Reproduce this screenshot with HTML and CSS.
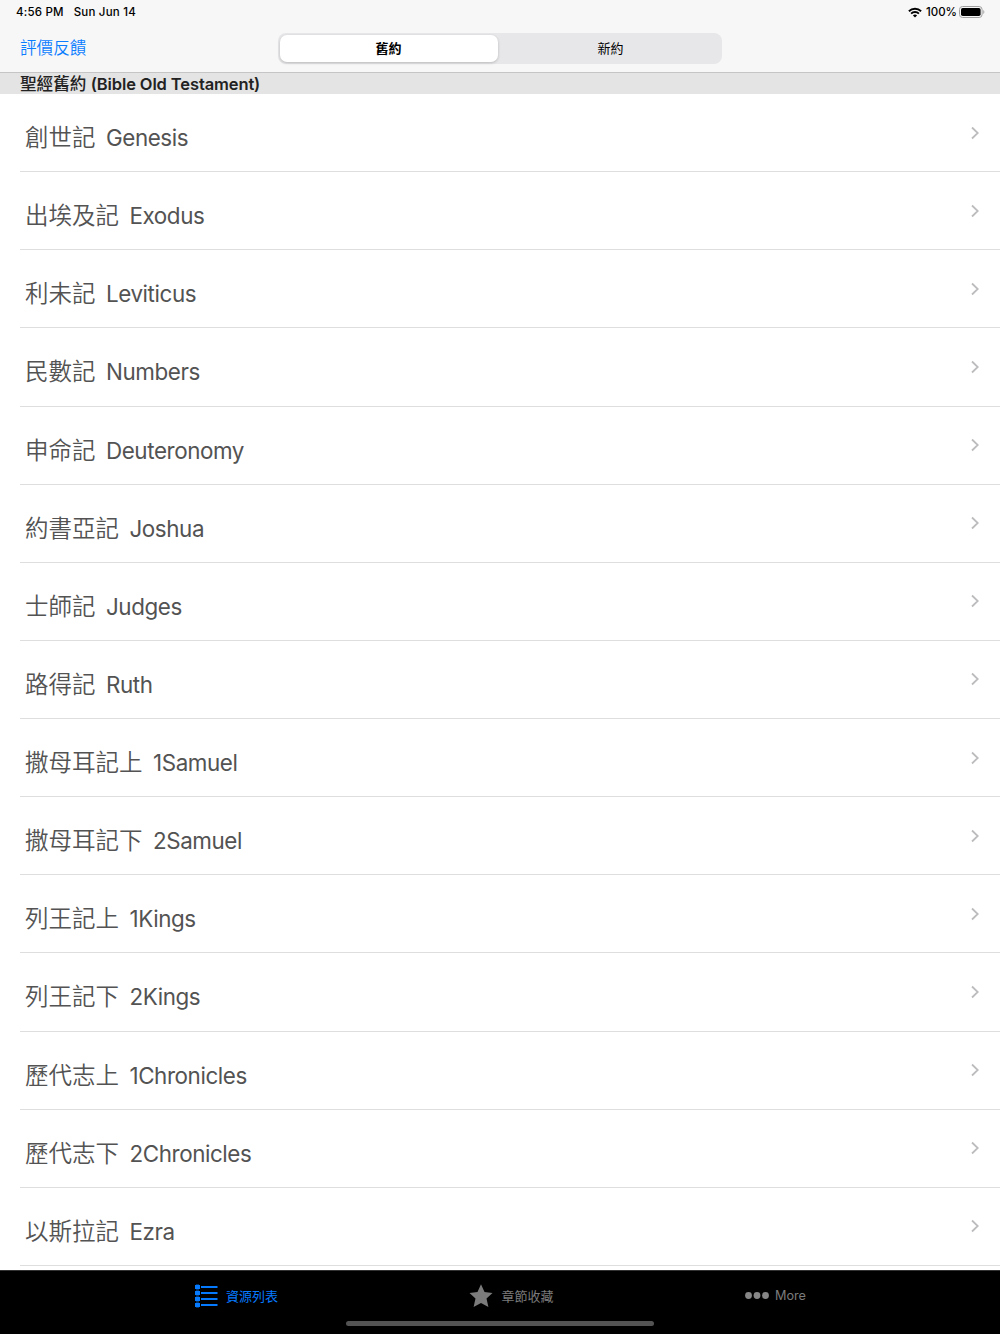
FILE: index.html
```html
<!DOCTYPE html>
<html lang="zh-Hant">
<head>
<meta charset="utf-8">
<title>聖經</title>
<link rel="stylesheet" href="styles.css">
</head>
<body>
<header class="top">
  <div class="status">
    <span class="time">4:56 PM</span><span class="date">Sun Jun 14</span>
    <svg class="wifi" width="14" height="11" viewBox="0 0 14 11" fill="none" stroke="#000" stroke-width="1.9"><path d="M.9 4.2a8.800 8.800 0 0 1 12.200 0M3.100 6.600a5.500 5.500 0 0 1 7.800 0"/><path d="M7 10.600 4.900 8.500a2.900 2.900 0 0 1 4.200 0z" fill="#000" stroke="none"/></svg>
    <span class="percent">100%</span>
    <svg class="battery" width="26" height="12" viewBox="0 0 26 12"><rect x=".5" y=".5" width="22.6" height="11" rx="3" fill="none" stroke="#a0a0a0"/><rect x="2" y="2" width="19.6" height="8" rx="1.7"/><path d="M24.3 4v4c1.4-.5 1.4-3.500 0-4z" fill="#a0a0a0"/></svg>
  </div>
  <nav class="bar">
    <a class="feedback">評價反饋</a>
    <div class="segments"><span class="segment selected">舊約</span><span class="segment">新約</span></div>
  </nav>
</header>
<h1 class="section">聖經舊約 <span class="section-en">(Bible Old Testament)</span></h1>
<ul class="books"></ul>
<footer class="tabs">
  <div class="tab-row">
    <div class="tab active">
      <svg class="list-icon" width="23" height="24" viewBox="0 0 23 24" fill="#067aff"><path d="M0 1h5v4H0zM0 7h5v4H0zM0 13h5v4H0zM0 19h5v4H0zM6 2h16.500v2H6zM6 8h16.500v2H6zM6 14h16.500v2H6zM6 20h16.500v2H6z"/><path d="M1 0h3v24H1z" opacity=".4"/></svg>
      <span>資源列表</span>
    </div>
    <div class="tab">
      <svg class="star-icon" width="24" height="24" viewBox="0 0 24 24" fill="#7b7b7b"><path d="m12 .3 3.500 7.800 8 .8-6 5.600 1.900 8.600L12 18.900l-7.400 4.200 1.900-8.600-6-5.600 8-.8z"/></svg>
      <span>章節收藏</span>
    </div>
    <div class="tab tab-more">
      <svg class="more-icon" width="24" height="8" viewBox="0 0 24 8" fill="#868686"><circle cx="3.500" cy="3.500" r="3.400"/><circle cx="12" cy="3.500" r="3.400"/><circle cx="20.500" cy="3.500" r="3.400"/></svg>
      <span class="more">More</span>
    </div>
  </div>
  <div class="home"></div>
</footer>
<script src="books.js"></script>
</body>
</html>
```
FILE: styles.css
```css
* { box-sizing: border-box; }
body {
  margin: 0;
  width: 1000px;
  height: 1334px;
  overflow: hidden;
  display: flex;
  flex-direction: column;
  background: #fff;
  font-family: Inter, "Noto Sans CJK TC", sans-serif;
}
.top { height: 73px; flex: none; background: #f7f7f7; border-bottom: 1px solid #c5c5c5; }
.status {
  height: 24px;
  display: flex;
  align-items: center;
  padding: 0 15px 0 16px;
  font-size: 11.5px;
  font-weight: 500;
  letter-spacing: .2px;
  white-space: nowrap;
}
.date { margin-left: 10px; }
.wifi { margin-left: auto; }
.percent { margin: 0 2px 0 4px; letter-spacing: 0; }
.bar { height: 48px; display: grid; grid-template-columns: 1fr 444px 1fr; align-items: center; }
.feedback { padding: 0 0 0 20px; color: #0b7dff; font-size: 16.600px; font-weight: 350; line-height: 24px; }
.segments { height: 31px; display: flex; padding: 2px; border-radius: 8px; background: #e7e7e9; }
.segment { flex: 1; display: flex; align-items: center; justify-content: center; padding-left: 3px; font-size: 13px; font-weight: 400; line-height: 20px; }
.selected { flex: 0 0 218px; padding: 0 1px 0 0; border-radius: 7px; background: #fff; font-weight: 600; box-shadow: 0 1px 3px #0003; }
.section { margin: 0; height: 21px; flex: none; padding: 1px 0 0 20px; background: #e4e4e4; color: #222; font-size: 16.600px; font-weight: 500; line-height: 21px; white-space: nowrap; }
.section-en { font-weight: 600; font-size: 16.500px; letter-spacing: -.12px; }
.books { flex: 1; min-height: 0; margin: 0; padding: 0 0 0 20px; overflow: hidden; list-style: none; }
.book { height: 78.125px; display: flex; align-items: center; padding: 11px 21px 0 5px; border-bottom: 1px solid #dedede; color: #535353; font-size: 22.400px; line-height: 34px; white-space: nowrap; }
.zh { font-size: 23.500px; font-weight: 350; }
.en { margin-left: 10.500px; letter-spacing: -.42px; }
.chevron { margin: 0 0 11px auto; }
.tabs { height: 64px; flex: none; background: #000; border-top: 1px solid #333; }
.tab-row { height: 50px; display: grid; grid-template-columns: 275px 275px 252px; padding-left: 99px; }
.tab { display: flex; align-items: center; justify-content: center; gap: 8px; color: #7b7b7b; font-size: 13px; line-height: 20px; }
.tab-more { gap: 6px; padding-left: 1px; font-size: 12.700px; }
.active { color: #067aff; }
.home { width: 308px; height: 5px; margin: 0 auto; border-radius: 3px; background: #535353; }
```
FILE: books.js
```js
const books = [
  ["創世記", "Genesis"], ["出埃及記", "Exodus"], ["利未記", "Leviticus"],
  ["民數記", "Numbers"], ["申命記", "Deuteronomy"], ["約書亞記", "Joshua"],
  ["士師記", "Judges"], ["路得記", "Ruth"], ["撒母耳記上", "1Samuel"],
  ["撒母耳記下", "2Samuel"], ["列王記上", "1Kings"], ["列王記下", "2Kings"],
  ["歷代志上", "1Chronicles"], ["歷代志下", "2Chronicles"], ["以斯拉記", "Ezra"]
];
document.querySelector(".books").innerHTML = books.map(([zh, en]) => `
  <li class="book"><span class="zh">${zh}</span><span class="en">${en}</span>
  <svg class="chevron" width="8" height="14" viewBox="0 0 8 14" fill="none" stroke="#bcbcbe" stroke-width="1.800"><path d="m1 1.500 5.800 5.500L1 12.500"/></svg></li>`).join("");
```
